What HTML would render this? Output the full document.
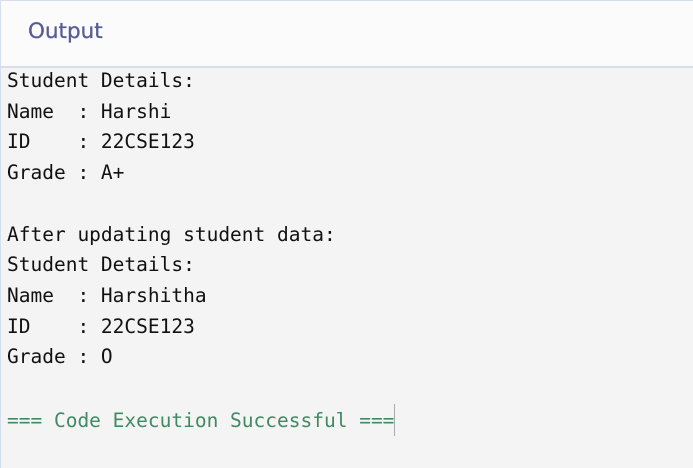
<!DOCTYPE html>
<html><head><style>
html,body{margin:0;padding:0;width:693px;height:468px;overflow:hidden;background:#f4f4f4}
.wrap{position:absolute;left:0;top:0;width:693px;height:468px;border-left:1px solid #d5deec;border-top:1px solid #d5deec;box-sizing:border-box}
.hdr{height:65px;background:#fbfbfb;border-bottom:2px solid #d5deec;box-sizing:content-box}
.hdr span{position:absolute;left:27px;top:18px;font-family:"DejaVu Sans","Liberation Sans",sans-serif;font-size:21.5px;color:#575c94;-webkit-text-stroke:0.3px #575c94}
pre{position:absolute;left:7px;top:66px;margin:0;font-family:"DejaVu Sans Mono","Liberation Mono",monospace;font-size:19.5px;line-height:30.72px;color:#111}
.g{color:#3f8a62}
.cur{display:inline-block;width:1px;height:32px;background:#aaa;vertical-align:-9px}
</style></head><body>
<div class="wrap"><div class="hdr"><span>Output</span></div></div>
<pre>Student Details:
Name  : Harshi
ID    : 22CSE123
Grade : A+

After updating student data:
Student Details:
Name  : Harshitha
ID    : 22CSE123
Grade : O

<span class="g">=== Code Execution Successful ===</span><span class="cur"></span></pre>
</body></html>
